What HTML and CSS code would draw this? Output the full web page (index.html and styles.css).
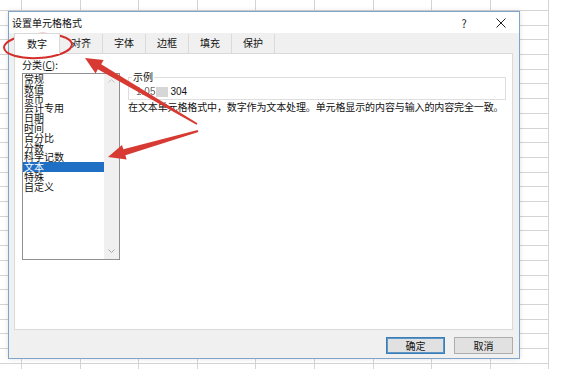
FILE: index.html
```html
<!DOCTYPE html>
<html lang="zh">
<head>
<meta charset="utf-8">
<title>设置单元格格式</title>
<link rel="stylesheet" href="styles.css">
</head>
<body>
<div class="sheet">
  <div class="dialog">
    <div class="titlebar">
      <span class="title">设置单元格格式</span>
      <span class="help">?</span>
      <span class="close"><svg width="10" height="10" viewBox="0 0 10 10"><path d="M0.5 0.5 L9.5 9.5 M9.5 0.5 L0.5 9.5" stroke="#222" stroke-width="1" fill="none"/></svg></span>
    </div>
    <div class="body">
      <div class="tabs">
        <div class="tab active">数字</div>
        <div class="tab">对齐</div>
        <div class="tab">字体</div>
        <div class="tab">边框</div>
        <div class="tab">填充</div>
        <div class="tab">保护</div>
      </div>
      <div class="panel">
        <div class="left">
          <div class="label">分类(<u>C</u>):</div>
          <div class="listbox">
            <ul class="items">
              <li>常规</li>
              <li>数值</li>
              <li>货币</li>
              <li>会计专用</li>
              <li>日期</li>
              <li>时间</li>
              <li>百分比</li>
              <li>分数</li>
              <li>科学记数</li>
              <li class="sel">文本</li>
              <li>特殊</li>
              <li>自定义</li>
            </ul>
            <div class="scroll">
              <svg width="7" height="4" viewBox="0 0 7 4"><path d="M0.5 3.5 L3.5 0.5 L6.5 3.5" stroke="#c4c4c4" fill="none"/></svg>
              <svg width="7" height="4" viewBox="0 0 7 4"><path d="M0.5 0.5 L3.5 3.5 L6.5 0.5" stroke="#a8a8a8" fill="none"/></svg>
            </div>
          </div>
        </div>
        <div class="right">
          <fieldset class="sample">
            <legend>示例</legend>
            <div class="value"><span class="faded">1.05</span><span class="smudge"></span><span>304</span></div>
          </fieldset>
          <p class="desc">在文本单元格格式中，数字作为文本处理。单元格显示的内容与输入的内容完全一致。</p>
        </div>
      </div>
      <div class="footer">
        <button class="btn primary">确定</button>
        <button class="btn">取消</button>
      </div>
    </div>
  </div>
  <svg class="annot" width="561" height="369" viewBox="0 0 561 369">
    <ellipse cx="38" cy="46" rx="34" ry="12" transform="rotate(-3 38 46)" fill="none" stroke="#d42e2a" stroke-width="2"/>
    <polygon points="85,58 103.6,60 101.2,64.2 197.5,123.2 196.5,124.8 97.8,69.3 95.6,73.4" fill="#d63a32"/>
    <polygon points="108,157 126.6,159.6 125.4,155.3 198.4,131.9 197.6,130.1 123.3,149.3 122,145" fill="#d63a32"/>
  </svg>
</div>
</body>
</html>
```

FILE: styles.css
```css
body {
  margin: 0;
  font-family: "Noto Sans CJK SC", "Noto Sans", sans-serif;
  font-size: 10px;
  color: #111;
}

.sheet {
  position: relative;
  width: 561px;
  height: 369px;
  box-sizing: border-box;
  padding: 11px 0 0 8px;
  overflow: hidden;
  background-color: #fff;
  background-image:
    repeating-linear-gradient(to bottom, transparent 0 10px, #d4d4d4 10px 11px, transparent 11px 14.7px),
    repeating-linear-gradient(to right, transparent 0 21px, #d4d4d4 21px 22px, transparent 22px 58.6px);
  background-size: 549px 100%;
  background-repeat: no-repeat;
}

.dialog {
  width: 512px;
  height: 348px;
  box-sizing: border-box;
  border: 1px solid #7ea4c9;
  background: #f0f0f0;
  display: flex;
  flex-direction: column;
  box-shadow: 0 0 5px rgba(0, 0, 0, 0.12);
}

.titlebar {
  flex: none;
  height: 21px;
  background: #fff;
  display: flex;
  align-items: center;
  padding: 0 4px 0 3px;
}

.title {
  flex: 1;
  line-height: 12px;
}

.help {
  width: 28px;
  margin-right: 9px;
  text-align: center;
  font-size: 11px;
  line-height: 12px;
  color: #222;
}

.close {
  width: 28px;
  display: flex;
  justify-content: center;
  align-items: center;
}

.body {
  flex: 1;
  display: flex;
  flex-direction: column;
  padding: 0 6px 0 5px;
  min-height: 0;
}

.tabs {
  flex: none;
  height: 20px;
  display: flex;
  align-items: flex-end;
}

.tab {
  width: 43px;
  height: 19px;
  box-sizing: border-box;
  border-right: 1px solid #dadada;
  text-align: center;
  line-height: 18px;
}

.tab.active {
  width: 46px;
  height: 21px;
  background: #fff;
  border: 1px solid #d9d9d9;
  border-bottom: none;
  margin-bottom: -1px;
  position: relative;
  z-index: 1;
  line-height: 20px;
}

.panel {
  flex: 1;
  min-height: 0;
  background: #fff;
  border: 1px solid #d9d9d9;
  display: flex;
  gap: 8px;
  padding: 5px 6px 0 7px;
}

.left {
  width: 98px;
  display: flex;
  flex-direction: column;
}

.label {
  line-height: 12px;
  height: 12px;
}

.listbox {
  margin-top: 2px;
  height: 187px;
  box-sizing: border-box;
  border: 1px solid #8f9092;
  display: flex;
  background: #fff;
}

.items {
  flex: 1;
  list-style: none;
  margin: 0;
  padding: 0;
  line-height: 9.8px;
}

.items li {
  height: 9.8px;
  padding-left: 1px;
  white-space: nowrap;
}

.items li.sel {
  background: #1f6fc5;
  color: #fff;
}

.scroll {
  width: 15px;
  background: #f0f0f0;
  display: flex;
  flex-direction: column;
  justify-content: space-between;
  align-items: center;
  padding: 5px 0 6px;
  box-sizing: border-box;
}

.right {
  flex: 1;
  padding-top: 12px;
  min-width: 0;
}

.sample {
  margin: 0;
  padding: 3px 4px 1px 3px;
  border: 1px solid #dedede;
  min-width: 0;
}

.sample legend {
  padding: 0 1px;
  line-height: 12px;
  font-size: 10px;
}

.value {
  line-height: 12px;
  height: 12px;
  padding-left: 4px;
  display: flex;
  align-items: center;
  font-family: "Liberation Sans", sans-serif;
}

.faded {
  color: #666;
  filter: blur(0.5px);
}

.smudge {
  display: inline-block;
  width: 12px;
  height: 10px;
  background: #d6d6d6;
  margin: 0 2px 0 1px;
  filter: blur(0.6px);
}

.desc {
  margin: 1px 0 0;
  line-height: 12px;
  white-space: nowrap;
  letter-spacing: -0.12px;
}

.footer {
  flex: none;
  height: 28px;
  box-sizing: border-box;
  display: flex;
  justify-content: flex-end;
  align-items: flex-start;
  padding-top: 7px;
  gap: 9px;
}

.btn {
  width: 59px;
  height: 17px;
  box-sizing: border-box;
  padding: 0;
  border: 1px solid #adadad;
  background: #e1e1e1;
  font-family: inherit;
  font-size: 10px;
  line-height: 14px;
  color: #111;
  text-align: center;
}

.btn.primary {
  border-color: #3d7db5;
  box-shadow: inset 0 0 0 1px #5d97c9;
}

.annot {
  position: absolute;
  left: 0;
  top: 0;
  pointer-events: none;
}
```
